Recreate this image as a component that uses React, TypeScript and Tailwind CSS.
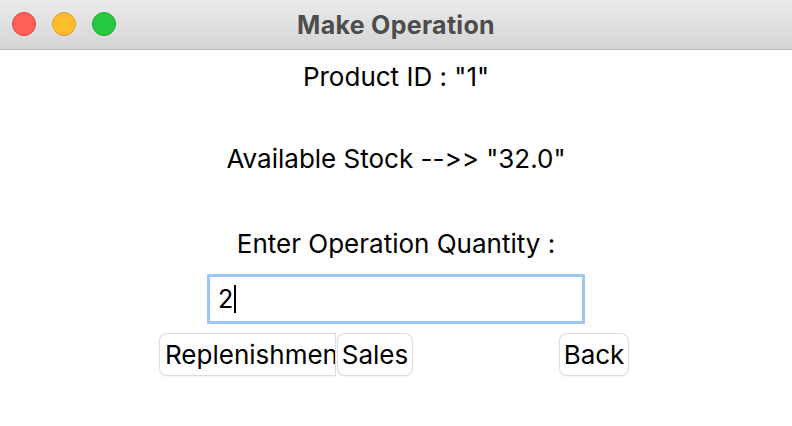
export default function App() {
  return (
    <div className="w-[792px] h-[426px] bg-white overflow-hidden font-['Inter',sans-serif] [font-feature-settings:'calt'_0,'liga'_0] text-black">
      {/* title bar */}
      <div className="relative h-[50px] border-b border-[#b9b9b9] bg-gradient-to-b from-[#ebebeb] to-[#d5d5d5] flex items-center justify-center">
        <div className="absolute left-[12px] top-[12px] flex gap-[16px]">
          <span className="w-[24px] h-[24px] rounded-full bg-[#fe5f57] border border-[#e0443e]" />
          <span className="w-[24px] h-[24px] rounded-full bg-[#febc2e] border border-[#dea123]" />
          <span className="w-[24px] h-[24px] rounded-full bg-[#28c840] border border-[#1aab29]" />
        </div>
        <span className="text-[25px] leading-[30px] font-bold text-[#4d4d4d] tracking-[0.3px]">Make Operation</span>
      </div>

      <div className="flex flex-col items-center text-[26px] leading-[32px]">
        <div className="h-[56px] pt-[11px]">Product ID : "1"</div>
        <div className="h-[84px] pt-[37px]">Available Stock --&gt;&gt; "32.0"</div>
        <div className="h-[84px] pt-[38px]">Enter Operation Quantity :</div>
        <div className="w-[378px] h-[50px] border-[3px] border-[#9dc6f4] rounded-[1px] flex items-center pl-[8px] bg-white">
          <span className="text-[25px]">2</span>
          <span className="w-[2px] h-[28px] bg-black ml-[1px]" />
        </div>
      </div>

      <div className="flex pl-[160px] mt-[10px] h-[41px] text-[26px] leading-[32px]">
        <button className="w-[175px] h-[41px] rounded-l-[7px] bg-white shadow-[0_0_0_1px_#dcdcdc,0_1px_2px_rgba(0,0,0,0.15)] overflow-hidden whitespace-nowrap text-left pl-[5px]">
          Replenishment
        </button>
        <button className="ml-[3px] w-[74px] h-[41px] rounded-[7px] bg-white shadow-[0_0_0_1px_#dcdcdc,0_1px_2px_rgba(0,0,0,0.15)] text-center">
          Sales
        </button>
        <button className="ml-[148px] w-[68px] h-[41px] rounded-[7px] bg-white shadow-[0_0_0_1px_#dcdcdc,0_1px_2px_rgba(0,0,0,0.15)] text-center">
          Back
        </button>
      </div>
    </div>
  )
}
